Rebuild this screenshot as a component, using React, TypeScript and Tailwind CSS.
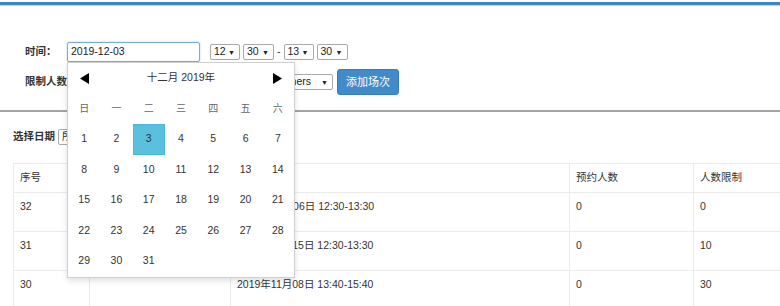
import React from 'react';

const FONT = "font-['Liberation_Sans','Noto_Sans_CJK_SC',sans-serif]";

const FakeSelect: React.FC<{ value: string; className?: string }> = ({ value, className = '' }) => (
    <div
        className={`flex items-center justify-between h-[16px] border border-[#a9a9a9] rounded-[2px] bg-white pl-[3px] pr-[4px] text-[10.5px] text-[#222] ${className}`}
    >
        <span>{value}</span>
        <span className="text-[7px] leading-none text-[#222]">▼</span>
    </div>
);

const Triangle: React.FC<{ dir: 'left' | 'right' }> = ({ dir }) => (
    <svg width="9" height="11" viewBox="0 0 9 11">
        {dir === 'left' ? <polygon points="9,0 9,11 0,5.5" fill="#000" /> : <polygon points="0,0 0,11 9,5.5" fill="#000" />}
    </svg>
);

const weekdays = ['日', '一', '二', '三', '四', '五', '六'];

const Calendar: React.FC = () => {
    const days: (number | null)[] = [];
    for (let d = 1; d <= 31; d++) days.push(d);
    while (days.length < 35) days.push(null);

    return (
        <div className="absolute left-0 top-full z-10 w-[228px] border border-[#cfcfcf] bg-white shadow-[0_3px_6px_rgba(0,0,0,0.12)]">
            <div className="grid grid-cols-7">
                {/* Header */}
                <div className="h-[30.5px] flex items-center justify-center">
                    <Triangle dir="left" />
                </div>
                <div className="col-span-5 h-[30.5px] flex items-center justify-center text-[10.5px] text-[#333]">
                    十二月 2019年
                </div>
                <div className="h-[30.5px] flex items-center justify-center">
                    <Triangle dir="right" />
                </div>

                {/* Weekdays */}
                {weekdays.map((w) => (
                    <div key={w} className="h-[30.5px] flex items-center justify-center text-[10px] text-[#666]">
                        {w}
                    </div>
                ))}

                {/* Days */}
                {days.map((d, i) =>
                    d === 3 ? (
                        <div
                            key={i}
                            className="h-[30.5px] flex items-center justify-center bg-[#5bc0de] border border-[#46b8da] text-[10.5px] text-[#333]"
                        >
                            {d}
                        </div>
                    ) : (
                        <div key={i} className="h-[30.5px] flex items-center justify-center text-[10.5px] text-[#333]">
                            {d ?? ''}
                        </div>
                    )
                )}
            </div>
        </div>
    );
};

const rows = [
    { id: '32', date: '', time: '2019年12月06日 12:30-13:30', booked: '0', limit: '0' },
    { id: '31', date: '', time: '2019年11月15日 12:30-13:30', booked: '0', limit: '10' },
    { id: '30', date: '', time: '2019年11月08日 13:40-15:40', booked: '0', limit: '30' },
];

const App: React.FC = () => {
    return (
        <div className={`w-[780px] h-[306px] overflow-hidden bg-white text-[#333] ${FONT}`}>
            {/* Top bar */}
            <div className="pt-[2px]">
                <div className="h-[3px] bg-[#3d85c0]" />
                <div className="h-px bg-[#bcd6ec]" />
            </div>

            {/* Form */}
            <div className="pt-[36px] pl-[25px] pb-[15px]">
                <div className="flex items-center h-[20px]">
                    <span className="w-[42px] text-[10.5px] font-bold">时间：</span>
                    <div className="relative">
                        <div className="w-[133px] h-[20px] border border-[#7aa7dc] rounded-[2px] shadow-[0_0_2px_rgba(102,175,233,0.6)] flex items-center pl-[3px] text-[10.5px] text-[#222]">
                            2019-12-03
                        </div>
                        <Calendar />
                    </div>
                    <FakeSelect value="12" className="ml-[10px] w-[30px]" />
                    <FakeSelect value="30" className="ml-[3px] w-[31px]" />
                    <span className="mx-[3px] text-[10.5px]">-</span>
                    <FakeSelect value="13" className="w-[30px]" />
                    <FakeSelect value="30" className="ml-[3px] w-[31px]" />
                </div>
                <div className="flex items-center h-[26px] mt-[7px]">
                    <span className="w-[42px] text-[10.5px] font-bold whitespace-nowrap">限制人数：</span>
                    <div className="w-[133px] h-[20px] border border-[#ccc] rounded-[2px]" />
                    <div className="ml-[5px] w-[128px] h-[16px] border border-[#a9a9a9] rounded-[2px] flex items-center justify-end pr-[4px] text-[10.5px] text-[#222]">
                        <span className="mr-[10px]">All Partners</span>
                        <span className="text-[7px] leading-none">▼</span>
                    </div>
                    <button className="ml-[4px] w-[62px] h-[26px] rounded-[3px] bg-[#428bca] border border-[#357ebd] text-white text-[11px]">
                        添加场次
                    </button>
                </div>
            </div>

            <div className="h-[2px] bg-[#a3a3a3]" />

            {/* List */}
            <div className="pl-[13px] pt-[16px]">
                <div className="flex items-center h-[17px]">
                    <span className="text-[10.5px] font-bold">选择日期</span>
                    <div className="ml-[3px] w-[80px] h-[16px] border border-[#a9a9a9] rounded-[2px] flex items-center pl-[3px] text-[10.5px]">
                        所有日期
                    </div>
                </div>

                <table className="mt-[18px] border-collapse table-fixed w-[887px] text-[10.5px] text-[#333]">
                    <colgroup>
                        <col className="w-[76px]" />
                        <col className="w-[141px]" />
                        <col className="w-[339px]" />
                        <col className="w-[124px]" />
                        <col className="w-[207px]" />
                    </colgroup>
                    <thead>
                        <tr className="h-[29px]">
                            {['序号', '场次日期', '时间', '预约人数', '人数限制'].map((h) => (
                                <th
                                    key={h}
                                    className="border border-[#ebebeb] px-[6px] py-[6px] text-left font-normal leading-[15px] align-top"
                                >
                                    {h}
                                </th>
                            ))}
                        </tr>
                    </thead>
                    <tbody>
                        {rows.map((r) => (
                            <tr key={r.id} className="h-[39px]">
                                {[r.id, r.date, r.time, r.booked, r.limit].map((c, i) => (
                                    <td
                                        key={i}
                                        className="border border-[#ebebeb] px-[6px] pt-[6px] align-top leading-[15px]"
                                    >
                                        {c}
                                    </td>
                                ))}
                            </tr>
                        ))}
                    </tbody>
                </table>
            </div>
        </div>
    );
};

export default App;
